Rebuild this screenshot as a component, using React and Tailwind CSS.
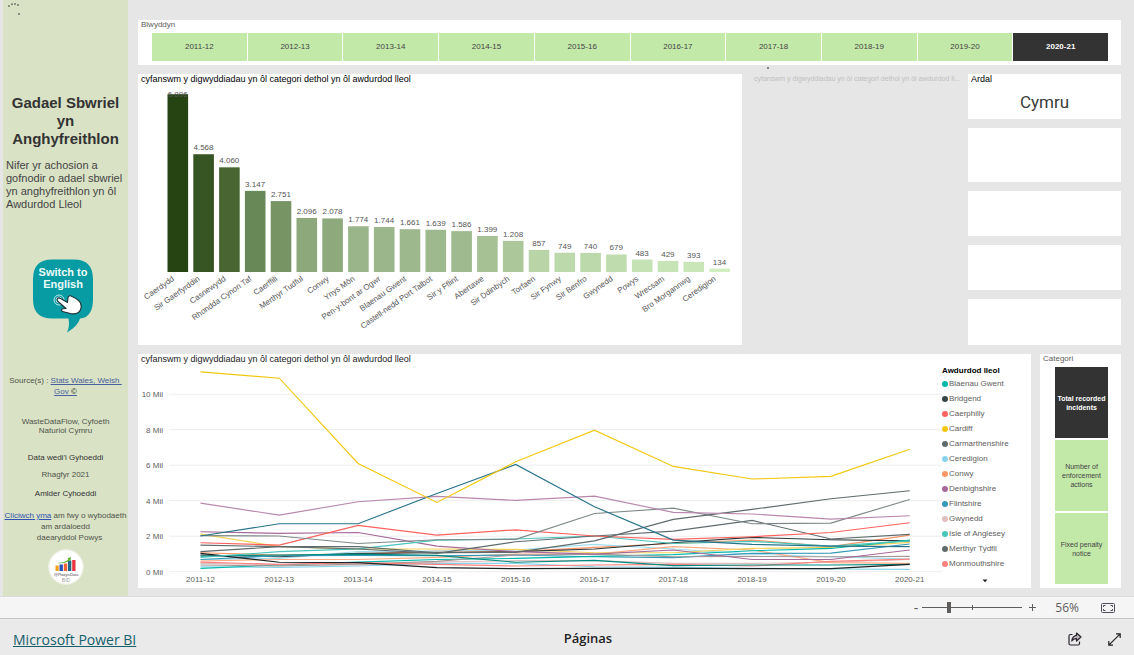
import React, { useState } from "react";

const YEARS = ["2011-12", "2012-13", "2013-14", "2014-15", "2015-16", "2016-17", "2017-18", "2018-19", "2019-20", "2020-21"];

const CATEGORIES = ["Total recorded incidents", "Number of enforcement actions", "Fixed penalty notice"];

const BARS = [
  ["Caerdydd", 6896, "#264411"],
  ["Sir Gaerfyrddin", 4568, "#375523"],
  ["Casnewydd", 4060, "#486532"],
  ["Rhondda Cynon Taf", 3147, "#698857"],
  ["Caerffili", 2751, "#779564"],
  ["Merthyr Tudful", 2096, "#8da97c"],
  ["Conwy", 2078, "#8eaa7d"],
  ["Ynys Môn", 1774, "#9ab589"],
  ["Pen-y-bont ar Ogwr", 1744, "#9bb68a"],
  ["Blaenau Gwent", 1661, "#9db88c"],
  ["Castell-nedd Port Talbot", 1639, "#9eb98d"],
  ["Sir y Fflint", 1586, "#9fba8e"],
  ["Abertawe", 1399, "#a6c295"],
  ["Sir Ddinbych", 1208, "#acc89b"],
  ["Torfaen", 857, "#b9d5a8"],
  ["Sir Fynwy", 749, "#bcd9ab"],
  ["Sir Benfro", 740, "#bcd9ab"],
  ["Gwynedd", 679, "#bfdcae"],
  ["Powys", 483, "#c5e2b4"],
  ["Wrecsam", 429, "#c7e4b6"],
  ["Bro Morgannwg", 393, "#c9e6b8"],
  ["Ceredigion", 134, "#d1eec0"],
];

const SERIES = [
  ["#8AD4EB", [0.28, 0.24, 0.32, 0.47, 0.47, 0.28, 0.24, 0.19, 0.15, 0.13]],
  ["#DFBFBF", [0.47, 0.38, 0.38, 0.54, 0.62, 0.62, 0.47, 0.47, 0.53, 0.69]],
  ["#FE9666", [1.07, 0.94, 0.99, 1.16, 1.13, 1.37, 1.59, 1.78, 1.41, 2.06]],
  ["#A1DDEF", [0.69, 0.75, 1.14, 1.16, 1.22, 1.54, 1.28, 0.99, 0.84, 0.71]],
  ["#FEAB85", [0.6, 0.69, 0.69, 0.81, 0.99, 0.99, 1.41, 1.22, 0.51, 0.47]],
  ["#F4D25A", [2.12, 1.41, 1.28, 1.28, 1.26, 1.07, 1.07, 1.31, 1.37, 1.65]],
  ["#293537", [0.94, 0.84, 1.03, 1.07, 1.13, 1.28, 1.63, 1.93, 1.8, 1.74]],
  ["#3599B8", [0.69, 0.9, 0.92, 0.9, 0.94, 0.84, 0.79, 1.03, 1.05, 1.56]],
  ["#01B8AA", [0.19, 0.38, 0.54, 0.69, 0.75, 0.86, 0.96, 1.18, 1.31, 1.78]],
  ["#A69999", [0.38, 0.32, 0.43, 0.58, 0.94, 0.99, 0.84, 0.86, 0.84, 0.86]],
  ["#FD817E", [0.54, 0.41, 0.51, 0.41, 0.32, 0.38, 0.41, 0.32, 0.58, 0.71]],
  ["#018A80", [0.88, 0.94, 0.99, 0.92, 0.53, 0.64, 0.34, 0.38, 0.38, 0.41]],
  ["#1C2325", [1.03, 0.53, 0.51, 0.23, 0.17, 0.19, 0.19, 0.17, 0.17, 0.41]],
  ["#A66999", [2.25, 2.16, 2.21, 1.44, 1.13, 0.99, 1.22, 0.69, 0.69, 1.22]],
  ["#4AC5BB", [0.81, 1.13, 1.29, 1.78, 1.84, 2.01, 1.59, 1.71, 1.44, 1.74]],
  ["#5F6B6D", [1.5, 1.41, 1.28, 1.03, 1.69, 2.01, 2.29, 2.89, 1.84, 2.1]],
  ["#FD625E", [1.63, 1.5, 2.61, 2.06, 2.36, 2.01, 1.82, 1.97, 2.21, 2.76]],
  ["#7F898A", [2.03, 2.01, 1.59, 1.8, 1.82, 3.28, 3.58, 2.7, 2.74, 4.07]],
  ["#5F6B6D", [1.13, 1.41, 1.41, 1.07, 1.09, 1.74, 2.95, 3.51, 4.11, 4.56]],
  ["#B887AD", [3.86, 3.19, 3.94, 4.24, 4.02, 4.26, 3.34, 3.25, 2.96, 3.15]],
  ["#28738A", [2.01, 2.7, 2.7, 4.41, 6.04, 3.66, 1.78, 1.54, 1.44, 1.41]],
  ["#F2C80F", [11.26, 10.9, 6.1, 3.9, 6.19, 7.97, 5.93, 5.22, 5.37, 6.9]],
];

const LEGEND = [
  ["Blaenau Gwent", "bg-[#01B8AA]"],
  ["Bridgend", "bg-[#374649]"],
  ["Caerphilly", "bg-[#FD625E]"],
  ["Cardiff", "bg-[#F2C80F]"],
  ["Carmarthenshire", "bg-[#5F6B6D]"],
  ["Ceredigion", "bg-[#8AD4EB]"],
  ["Conwy", "bg-[#FE9666]"],
  ["Denbighshire", "bg-[#A66999]"],
  ["Flintshire", "bg-[#3599B8]"],
  ["Gwynedd", "bg-[#DFBFBF]"],
  ["Isle of Anglesey", "bg-[#4AC5BB]"],
  ["Merthyr Tydfil", "bg-[#5F6B6D]"],
  ["Monmouthshire", "bg-[#FB8281]"],
];

const CHART_TITLE = "cyfanswm y digwyddiadau yn ôl categori dethol yn ôl awdurdod lleol";
const SHORT_TITLE = "cyfanswm y digwyddiadau yn ôl categori dethol yn ôl awdurdod ll...";

function formatCount(n) {
  return String(n).replace(/\B(?=(\d{3})+$)/g, ".");
}

function BarChart() {
  const base = 185;
  return (
    <svg viewBox="0 0 604 258" className="block w-full" role="img" aria-label={CHART_TITLE}>
      {BARS.map(([name, value, color], i) => {
        const x = 29.5 + i * 25.8;
        const h = value * 0.02578;
        const mid = x + 10.2;
        return (
          <g key={name}>
            <rect x={x} y={base - h} width="20.6" height={h} fill={color} />
            <text x={mid} y={Math.max(base - h - 4, 10)} textAnchor="middle" fontSize="8" fill="#555">
              {formatCount(value)}
            </text>
            <text transform={`translate(${mid - 3} 193) rotate(-35)`} textAnchor="end" fontSize="8" fill="#555">
              {name}
            </text>
          </g>
        );
      })}
    </svg>
  );
}

function LineChart() {
  const y = (v) => 204.7 - v * 17.75;
  const x = (i) => 62.5 + i * 78.8;
  return (
    <svg viewBox="0 0 804 221" className="block w-full" role="img" aria-label={CHART_TITLE}>
      {[0, 2, 4, 6, 8, 10].map((v) => (
        <g key={v}>
          <line x1="31" x2="804" y1={y(v)} y2={y(v)} stroke="#ededed" strokeWidth="1" />
          <text x="25" y={y(v) + 3} textAnchor="end" fontSize="8" fill="#605e5c">{v} Mil</text>
        </g>
      ))}
      {SERIES.map(([color, values], s) => (
        <polyline
          key={s}
          points={values.map((v, i) => `${x(i)},${y(v)}`).join(" ")}
          fill="none"
          stroke={color}
          strokeWidth="1.15"
        />
      ))}
      {YEARS.map((label, i) => (
        <text key={label} x={x(i)} y="215" textAnchor="middle" fontSize="8" fill="#605e5c">{label}</text>
      ))}
    </svg>
  );
}

function SwitchBubble() {
  return (
    <svg viewBox="0 0 62 74" className="block h-[74px] w-[62px]" aria-hidden="true">
      <path
        d="M20 .5H42Q61 .5 61 20V40Q61 58.500 48 59.500Q46 67 35 73.500Q38 67 36.500 59.500H20Q1 59.500 1 40V20Q1 .5 20 .5Z"
        fill="#079ba3"
      />
      <text x="31" y="17" textAnchor="middle" fontSize="11" fontWeight="700" fill="#eefcfb">Switch to</text>
      <text x="31" y="29" textAnchor="middle" fontSize="11" fontWeight="700" fill="#eefcfb">English</text>
      <circle cx="27" cy="41" r="5" fill="none" stroke="#b8e8ea" strokeWidth="1" />
      <circle cx="27" cy="41" r="3" fill="none" stroke="#b8e8ea" strokeWidth="1" />
      <path
        d="M25.500 39.500Q27 38.200 28.600 39.600L35.500 43.500L36 38.500Q37.500 35.500 40 37.500Q46 40 48.500 44Q50.500 50 46.500 53.500Q42 56 36.500 54L30.500 52.500Q28.500 51 30.500 49.800L34 49.500L26 42.500Q24.500 41 25.500 39.500Z"
        fill="#fff" stroke="#202c30" strokeWidth="1.100" strokeLinejoin="round"
      />
    </svg>
  );
}

function PowysLogo() {
  return (
    <svg viewBox="0 0 36 36" className="block h-9 w-9" role="img" aria-label="@PowysData BID">
      <circle cx="18" cy="18" r="17.200" fill="#fff" stroke="#eef1e4" strokeWidth="1.300" />
      <rect x="7.500" y="16.500" width="3.200" height="5.500" fill="#f5a11c" />
      <rect x="11.500" y="15.500" width="3.400" height="6.500" fill="#2754b8" />
      <rect x="15.800" y="14.500" width="3.400" height="7.500" fill="#f0643a" />
      <rect x="20" y="11.500" width="3.300" height="10.500" fill="#246a86" />
      <rect x="24.200" y="11" width="3.300" height="11" fill="#e8343f" />
      <path d="M9 14Q17 13.500 20.500 10.500L19.500 9.300L23 8L22.500 11.800L21.600 11.200Q17 15 9 14Z" fill="#5cb531" />
      <text x="18" y="26.500" textAnchor="middle" fontSize="4" fontStyle="italic" fill="#444">@PowysData</text>
      <text x="18" y="32.500" textAnchor="middle" fontSize="5" fill="#999">BID</text>
    </svg>
  );
}

function Sidebar() {
  return (
    <aside className="relative flex w-[125px] shrink-0 flex-col items-center bg-[#d9e2c5] text-center text-[8px] leading-[11px] text-[#4f544a]">
      <svg viewBox="0 0 14 14" className="absolute left-[4px] top-[2px] h-[14px] w-[14px]" aria-hidden="true">
        <g fill="#747a6e">
          <circle cx="2" cy="4" r="1" />
          <circle cx="5" cy="2.300" r="1" />
          <circle cx="8" cy="2" r="1" />
          <circle cx="11" cy="3" r="1" />
          <circle cx="12" cy="12" r="1.100" />
        </g>
      </svg>
      <h1 className="mt-[94px] px-1 text-[15px] font-bold leading-[18px] text-[#333]">
        Gadael Sbwriel<br />yn<br />Anghyfreithlon
      </h1>
      <p className="mt-[11px] w-full whitespace-nowrap pl-[3px] text-left text-[11px] leading-[13px] text-[#444]">
        Nifer yr achosion a<br />gofnodir o adael sbwriel<br />yn anghyfreithlon yn ôl<br />Awdurdod Lleol
      </p>
      <button type="button" aria-label="Switch to English" className="ml-[29px] mt-[48px] self-start">
        <SwitchBubble />
      </button>
      <p className="mt-[42px] whitespace-nowrap">
        Source(s) :{" "}
        <a href="#stats" className="text-[#4a5fa0] underline">
          Stats Wales, Welsh&nbsp;<br />Gov <span className="text-[#222]">©</span>
        </a>
      </p>
      <p className="mt-[20px] leading-[9px]">WasteDataFlow, Cyfoeth<br />Naturiol Cymru</p>
      <p className="mt-[17px] text-[#333]">Data wedi'i Gyhoeddi</p>
      <p className="mt-[6px]">Rhagfyr 2021</p>
      <p className="mt-[8px] text-[#333]">Amlder Cyhoeddi</p>
      <p className="mt-[11px] whitespace-nowrap">
        <a href="#powys" className="text-[#3352b0] underline">Cliciwch yma</a> am fwy o wybodaeth<br />
        am ardaloedd<br />
        <span className="pl-2">daearyddol Powys</span>
      </p>
      <div className="mt-[6px]"><PowysLogo /></div>
    </aside>
  );
}

function YearSlicer() {
  const [year, setYear] = useState("2020-21");
  return (
    <section className="h-[45px] bg-white pl-[14px] pr-[13px]">
      <h2 className="-ml-[11px] h-[13px] text-[8px] leading-[10px] text-[#605e5c]">Blwyddyn</h2>
      <div className="flex h-[28px] gap-px">
        {YEARS.map((y) => (
          <button
            key={y}
            type="button"
            aria-pressed={y === year}
            onClick={() => setYear(y)}
            className={
              y === year
                ? "flex-1 bg-[#333] text-[8px] font-bold text-white"
                : "flex-1 bg-[#c3e9a9] text-[8px] text-[#444]"
            }
          >
            {y}
          </button>
        ))}
      </div>
    </section>
  );
}

function CategorySlicer() {
  const [category, setCategory] = useState(CATEGORIES[0]);
  return (
    <section className="flex w-[81px] shrink-0 flex-col bg-white pb-1 pl-[15px] pr-[13px]">
      <h2 className="-ml-[12px] h-[13px] text-[8px] leading-[10px] text-[#605e5c]">Categori</h2>
      <div className="flex flex-1 flex-col gap-[2px]">
        {CATEGORIES.map((c) => (
          <button
            key={c}
            type="button"
            aria-pressed={c === category}
            onClick={() => setCategory(c)}
            className={
              c === category
                ? "flex-1 bg-[#333] text-[7px] font-bold leading-[9px] text-white"
                : "flex-1 bg-[#c3e9a9] px-1 text-[7px] leading-[9px] text-[#444]"
            }
          >
            {c}
          </button>
        ))}
      </div>
    </section>
  );
}

function ZoomBar() {
  const [zoom, setZoom] = useState(26);
  return (
    <div className="flex h-[23px] items-center justify-end border-y border-t-[#dcdcdc] border-b-[#c8c8c8] bg-[#f5f5f5] pr-[19px] font-['Open_Sans',sans-serif] text-[#605e5c]">
      <button type="button" aria-label="Zoom out" className="w-[12px] text-[14px] leading-[16px]">-</button>
      <div className="relative flex w-[100px] items-center">
        <span className="absolute left-1/2 h-[5px] w-px bg-[#605e5c]" />
        <input
          type="range"
          aria-label="Zoom"
          min="0"
          max="100"
          value={zoom}
          onChange={(e) => setZoom(Number(e.target.value))}
          className="h-[12px] w-full appearance-none bg-transparent [&::-webkit-slider-runnable-track]:h-px [&::-webkit-slider-runnable-track]:bg-[#605e5c] [&::-webkit-slider-thumb]:-mt-[5px] [&::-webkit-slider-thumb]:h-[11px] [&::-webkit-slider-thumb]:w-[4px] [&::-webkit-slider-thumb]:appearance-none [&::-webkit-slider-thumb]:bg-[#605e5c]"
        />
      </div>
      <button type="button" aria-label="Zoom in" className="ml-[6px] flex h-[9px] w-[9px] items-center">
        <svg viewBox="0 0 9 9" className="h-[9px] w-[9px]"><path d="M4.500 1V8M1 4.500H8" stroke="#605e5c" fill="none" /></svg>
      </button>
      <span className="ml-[14px] w-[28px] text-right text-[12px]">56%</span>
      <button type="button" aria-label="Fit to page" className="ml-[22px]">
        <svg viewBox="0 0 14 10" className="block h-[10px] w-[14px]" fill="none" stroke="#514d57">
          <rect x=".5" y=".5" width="13" height="9" rx="1" />
          <path d="M2.500 4V2.500H4.500M9.500 2.500H11.500V4M11.500 6V7.500H9.500M4.500 7.500H2.500V6" />
        </svg>
      </button>
    </div>
  );
}

function Footer() {
  return (
    <footer className="flex h-[36px] items-center bg-[#eaeaea] px-[13px] pt-[4px] font-['Open_Sans',sans-serif]">
      <div className="w-[49.7%] text-[14px]">
        <a href="#powerbi" className="text-[#14606a] underline">Microsoft Power BI</a>
      </div>
      <span className="text-[13px] font-semibold text-[#222]">Páginas</span>
      <div className="ml-auto flex items-center gap-[26px]">
        <button type="button" aria-label="Share">
          <svg viewBox="0 0 14 14" className="block h-[14px] w-[14px]" fill="none" stroke="#2b2330" strokeWidth="1.200" strokeLinejoin="round">
            <path d="M4.500 2.500H2.500Q1 2.500 1 4V11.500Q1 13 2.500 13H10Q11.500 13 11.500 11.500V9.500" />
            <path d="M8.500 1L13 5L8.500 9V6.700Q5.500 6.500 3.800 9Q4.300 4 8.500 3.300Z" fill="#b9b6bc" />
          </svg>
        </button>
        <button type="button" aria-label="Full screen">
          <svg viewBox="0 0 13 13" className="block h-[13px] w-[13px]" fill="none" stroke="#222" strokeWidth="1.200">
            <path d="M.8 12.200L12.200 .8M8 .8H12.200V5M.8 8V12.200H5" />
          </svg>
        </button>
      </div>
    </footer>
  );
}

export default function App() {
  return (
    <div className="flex min-h-screen flex-col bg-[#eaeaea] font-['Liberation_Sans',Arial,sans-serif]">
      <div className="flex flex-1 bg-[#e6e6e6] pl-[3px]">
        <Sidebar />
        <main className="flex min-w-0 flex-1 flex-col gap-[9px] pb-[8px] pl-[10px] pr-[13px] pt-[20px]">
          <YearSlicer />
          <div className="flex">
            <section className="min-w-0 flex-1 bg-white">
              <h2 className="h-[13px] pl-[3px] text-[9px] leading-[11px] text-black">{CHART_TITLE}</h2>
              <BarChart />
            </section>
            <section className="relative w-[226px] shrink-0 pl-[12px]">
              <span className="absolute -top-[7px] left-[25px] h-[2px] w-[2px] rounded-full bg-[#666]" />
              <h2 title={CHART_TITLE} className="whitespace-nowrap text-[7px] leading-[10px] text-[#c0c0c0]">{SHORT_TITLE}</h2>
            </section>
            <div className="flex w-[153px] shrink-0 flex-col gap-[9px]">
              <section className="h-[45px] bg-white">
                <h2 className="h-[12px] pl-[3px] text-[9px] leading-[11px] text-black">Ardal</h2>
                <p className="text-center font-['Roboto',sans-serif] text-[17px] leading-[33px] text-[#3a3a3a]">Cymru</p>
              </section>
              <div className="h-[54px] bg-white" />
              <div className="h-[45px] bg-white" />
              <div className="h-[45px] bg-white" />
              <div className="flex-1 bg-white" />
            </div>
          </div>
          <div className="flex gap-[9px]">
            <section className="flex min-w-0 flex-1 bg-white">
              <div className="min-w-0 flex-1">
                <h2 className="h-[13px] pl-[3px] text-[9px] leading-[11px] text-[#222]">{CHART_TITLE}</h2>
                <LineChart />
              </div>
              <div className="w-[89px] shrink-0 pt-[12px]">
                <h3 className="h-[10px] whitespace-nowrap text-[8px] font-bold leading-[10px] text-black">Awdurdod lleol</h3>
                <ul className="text-[8px] leading-[15px] text-[#605e5c]">
                  {LEGEND.map(([name, dot]) => (
                    <li key={name} className="flex items-center gap-px whitespace-nowrap">
                      <span className={`h-[6px] w-[6px] rounded-full ${dot}`} />
                      {name}
                    </li>
                  ))}
                </ul>
                <button type="button" aria-label="Next legend page" className="ml-[40px] mt-[8px] block">
                  <svg viewBox="0 0 6 4" className="block h-[4px] w-[6px]"><path d="M.5 .5H5.500L3 3.300Z" fill="#222" /></svg>
                </button>
              </div>
            </section>
            <CategorySlicer />
          </div>
        </main>
      </div>
      <ZoomBar />
      <Footer />
    </div>
  );
}
